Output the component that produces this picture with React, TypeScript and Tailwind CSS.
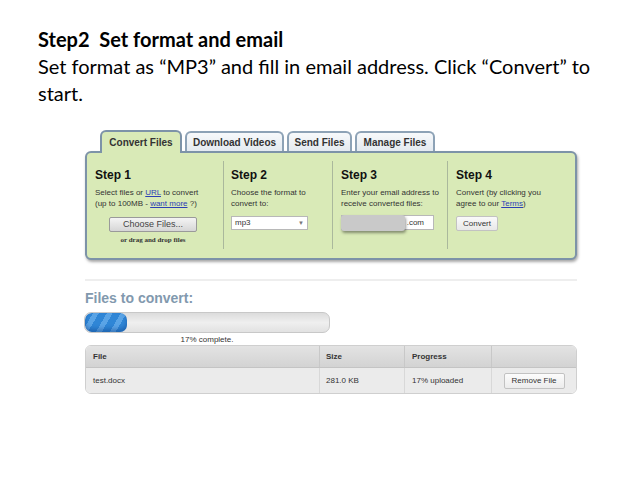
import React from 'react';

const tabs = [
  { name: 'Convert Files', w: 'w-[82px]', active: true },
  { name: 'Download Videos', w: 'w-[99px]', active: false },
  { name: 'Send Files', w: 'w-[65px]', active: false },
  { name: 'Manage Files', w: 'w-[80px]', active: false },
];

function Tabs() {
  return (
    <div className="flex items-end gap-[3px] pl-[15px] relative z-10">
      {tabs.map((t) =>
        t.active ? (
          <div
            key={t.name}
            className={`${t.w} h-[23px] -mb-[2px] rounded-t-[6px] border-2 border-b-0 border-[#7d93a8] bg-[#d9eab7] flex items-center justify-center text-[10px] font-bold text-[#333]`}
          >
            {t.name}
          </div>
        ) : (
          <div
            key={t.name}
            className={`${t.w} h-[20px] rounded-t-[6px] border-2 border-b-0 border-[#8da2b6] bg-gradient-to-b from-[#f7f9fb] to-[#e4eaf0] flex items-center justify-center text-[10px] font-bold text-[#333]`}
          >
            {t.name}
          </div>
        )
      )}
    </div>
  );
}

function Panel() {
  return (
    <div className="h-[109px] rounded-[6px] border-2 border-[#7d93a8] bg-[#d9eab7] shadow-[1px_2px_3px_rgba(0,0,0,0.35)] flex pt-[8px] text-[#333]">
      <div className="w-[136px] pl-[8px] pt-[7px] h-[88px]">
        <div className="text-[12px] font-bold leading-[14px] text-[#111]">Step 1</div>
        <div className="text-[8px] leading-[11px] mt-[5px]">
          Select files or <span className="text-[#2c3fb5] underline">URL</span> to convert
          <br />
          (up to 100MB - <span className="text-[#2c3fb5] underline">want more</span> ?)
        </div>
        <div className="pl-[14px] mt-[8px]">
          <div className="w-[88px] h-[15px] border border-[#9a9a9a] rounded-[2px] bg-gradient-to-b from-[#f4f4f4] to-[#d6d6d6] flex items-center justify-center text-[9px] text-[#444]">
            Choose Files...
          </div>
          <div className="w-[88px] text-center text-[7px] font-bold mt-[3px] font-['Liberation_Serif',serif]">
            or drag and drop files
          </div>
        </div>
      </div>
      <div className="w-[109px] pl-[7px] pt-[7px] h-[88px] border-l border-[#aab89c]">
        <div className="text-[12px] font-bold leading-[14px] text-[#111]">Step 2</div>
        <div className="text-[8px] leading-[11px] mt-[5px]">
          Choose the format to
          <br />
          convert to:
        </div>
        <div className="mt-[7px] w-[77px] h-[14px] bg-white border border-[#b8b8b8] flex items-center justify-between px-[3px] text-[8px]">
          <span>mp3</span>
          <span className="text-[6px] text-[#777]">▼</span>
        </div>
      </div>
      <div className="w-[115px] pl-[8px] pt-[7px] h-[88px] border-l border-[#aab89c]">
        <div className="text-[12px] font-bold leading-[14px] text-[#111]">Step 3</div>
        <div className="text-[8px] leading-[11px] mt-[5px]">
          Enter your email address to
          <br />
          receive converted files:
        </div>
        <div className="mt-[6px] relative w-[93px] h-[15px] bg-white border border-[#b8b8b8] flex items-center justify-end pr-[9px] text-[8px]">
          <span>.com</span>
          <div className="absolute -left-[1px] -top-[1px] w-[64px] h-[16px] rounded-[3px] bg-[#c9c9c9] shadow-[1px_2px_3px_rgba(0,0,0,0.4)]" />
        </div>
      </div>
      <div className="flex-1 pl-[8px] pt-[7px] h-[88px] border-l border-[#aab89c]">
        <div className="text-[12px] font-bold leading-[14px] text-[#111]">Step 4</div>
        <div className="text-[8px] leading-[11px] mt-[5px]">
          Convert (by clicking you
          <br />
          agree to our <span className="text-[#2c3fb5] underline">Terms</span>)
        </div>
        <div className="mt-[7px] w-[42px] h-[15px] border border-[#c2c2c2] rounded-[2px] bg-gradient-to-b from-[#fafafa] to-[#e8e8e8] flex items-center justify-center text-[8px]">
          Convert
        </div>
      </div>
    </div>
  );
}

function Progress() {
  return (
    <div>
      <div className="w-[246px] h-[21px] rounded-[7px] border border-[#c8c8c8] bg-gradient-to-b from-[#dcdcdc] via-[#efefef] to-[#e2e2e2] overflow-hidden">
        <div className="w-[42px] h-full rounded-[7px] bg-[repeating-linear-gradient(120deg,#2f86d6_0px,#2f86d6_7px,#5aa4e6_7px,#5aa4e6_12px)] shadow-[inset_0_-3px_4px_rgba(0,40,110,0.35)]" />
      </div>
      <div className="w-[246px] text-center text-[8px] leading-[10px] text-[#333] mt-[2px]">17% complete.</div>
    </div>
  );
}

function FileTable() {
  return (
    <div className="w-[492px] rounded-[6px] border border-[#cfcfcf] overflow-hidden text-[8px] text-[#333]">
      <div className="flex h-[22px] bg-gradient-to-b from-[#e3e3e3] to-[#d3d3d3] border-b border-[#c4c4c4] font-bold">
        <div className="w-[233px] pl-[7px] flex items-center">File</div>
        <div className="w-[85px] pl-[6px] flex items-center border-l border-[#c8c8c8]">Size</div>
        <div className="w-[87px] pl-[7px] flex items-center border-l border-[#c8c8c8]">Progress</div>
        <div className="flex-1 border-l border-[#c8c8c8]" />
      </div>
      <div className="flex h-[25px] bg-[#ebebeb]">
        <div className="w-[233px] pl-[7px] flex items-center">test.docx</div>
        <div className="w-[85px] pl-[6px] flex items-center border-l border-[#d8d8d8]">281.0 KB</div>
        <div className="w-[87px] pl-[7px] flex items-center border-l border-[#d8d8d8]">17% uploaded</div>
        <div className="flex-1 flex items-center justify-center border-l border-[#d8d8d8]">
          <div className="w-[61px] h-[16px] border border-[#c2c2c2] rounded-[2px] bg-gradient-to-b from-[#fcfcfc] to-[#ececec] flex items-center justify-center">
            Remove File
          </div>
        </div>
      </div>
    </div>
  );
}

export default function App() {
  return (
    <div className="w-[638px] h-[479px] bg-white overflow-hidden">
      <div className="pl-[38px] pt-[26px] font-['Lato','Liberation_Sans',sans-serif] text-[20px] leading-[27px] text-black">
        <div className="font-bold">Step2&nbsp; Set format and email</div>
        <div>Set format as “MP3” and fill in email address. Click “Convert” to</div>
        <div>start.</div>
      </div>
      <div className="ml-[85px] mt-[23px] w-[492px] font-['Liberation_Sans',Arial,sans-serif]">
        <Tabs />
        <Panel />
        <div className="mt-[19px] h-[2px] bg-[#eeeeee]" />
        <div className="mt-[9px] text-[14px] font-bold leading-[16px] text-[#8299ae]">Files to convert:</div>
        <div className="mt-[6px] -ml-[1px]">
          <Progress />
        </div>
        <div className="mt-[0px]">
          <FileTable />
        </div>
      </div>
    </div>
  );
}
